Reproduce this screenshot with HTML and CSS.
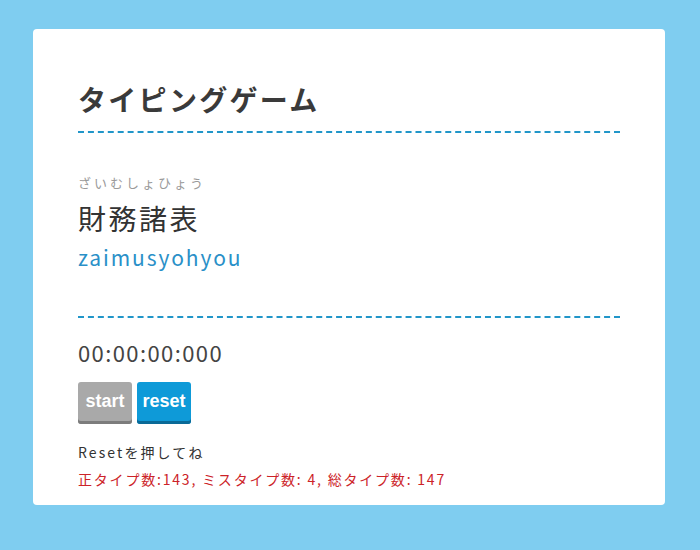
FILE: index.html
```html
<!DOCTYPE html>
<html lang="ja">
<head>
<meta charset="utf-8">
<title>タイピングゲーム</title>
<link rel="stylesheet" href="styles.css">
</head>
<body>
<main class="card">
  <h1 class="title">タイピングゲーム</h1>
  <section class="word">
    <div class="kana">ざいむしょひょう</div>
    <div class="kanji">財務諸表</div>
    <div class="romaji">zaimusyohyou</div>
  </section>
  <div class="timer">00:00:00:000</div>
  <div class="buttons">
    <button class="btn btn-start">start</button>
    <button class="btn btn-reset">reset</button>
  </div>
  <p class="message">Resetを押してね</p>
  <p class="result">正タイプ数:143, ミスタイプ数: 4, 総タイプ数: 147</p>
</main>
</body>
</html>
```
FILE: styles.css
```css
html, body {
  margin: 0;
  padding: 0;
}
body {
  background: #7fcdf0;
  font-family: "Noto Sans CJK JP", "Noto Sans", sans-serif;
  color: #333;
  padding: 29px 35px 45px 33px;
}
.card {
  background: #fff;
  border-radius: 4px;
  padding: 50px 45px 16px;
}
.title {
  margin: 0;
  font-size: 28px;
  line-height: 40px;
  font-weight: 700;
  letter-spacing: 2.3px;
  color: #3a3a3a;
  padding-bottom: 12px;
  border-bottom: 2px dashed #2196c9;
}
.word {
  padding-top: 41px;
  padding-bottom: 44px;
  border-bottom: 2px dashed #2196c9;
}
.kana {
  font-size: 13px;
  line-height: 18px;
  letter-spacing: 3px;
  color: #9a9a9a;
}
.kanji {
  margin-top: 9px;
  font-size: 28px;
  line-height: 34px;
  letter-spacing: 2.5px;
  color: #333;
}
.romaji {
  margin-top: 7px;
  font-size: 21px;
  line-height: 30px;
  letter-spacing: 1.9px;
  color: #2a90c8;
}
.timer {
  margin-top: 19px;
  font-size: 22px;
  line-height: 30px;
  letter-spacing: 1.4px;
  color: #444;
}
.buttons {
  margin-top: 15px;
  display: flex;
  gap: 5px;
}
.btn {
  width: 54px;
  height: 42px;
  border: none;
  border-radius: 3px;
  padding: 0 0 3px;
  font-family: "Liberation Sans", Arial, sans-serif;
  font-weight: 700;
  font-size: 18px;
  color: #fff;
}
.btn-start {
  background: #a9a9a9;
  box-shadow: inset 0 -3px 0 #7c7c7c;
}
.btn-reset {
  background: #0e9ad8;
  box-shadow: inset 0 -3px 0 #0a6a97;
}
.message {
  margin: 18px 0 0;
  font-size: 14px;
  line-height: 20px;
  letter-spacing: 2.1px;
  color: #333;
}
.result {
  margin: 7px 0 0;
  font-size: 14px;
  line-height: 20px;
  letter-spacing: 1.8px;
  color: #cc2328;
}
```
